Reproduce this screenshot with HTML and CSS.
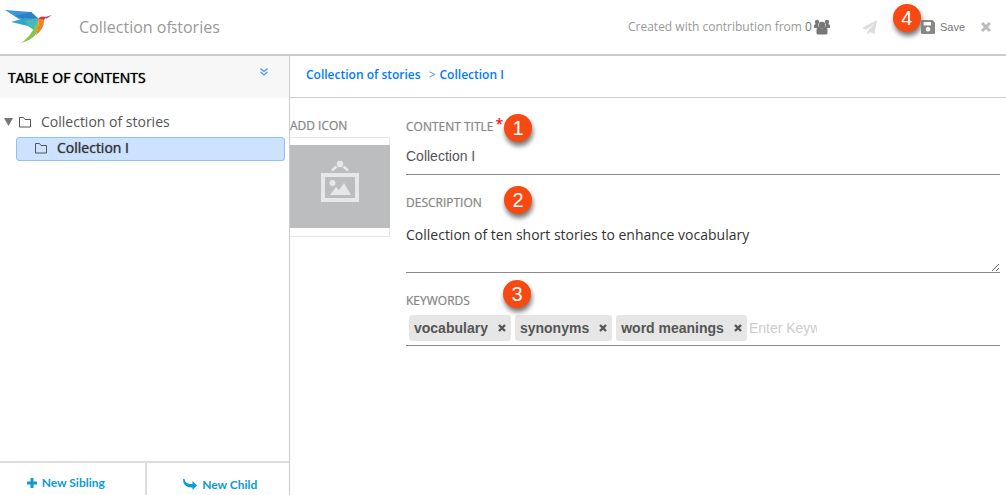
FILE: index.html
```html
<!DOCTYPE html>
<html lang="en">
<head>
<meta charset="utf-8">
<meta name="viewport" content="width=device-width, initial-scale=1">
<title>Collection of stories</title>
<link rel="stylesheet" href="styles.css">
</head>
<body>
<header class="topbar">
  <svg class="logo" viewBox="0 0 48 36" aria-hidden="true">
    <path fill="#3a98d8" d="M0 1 26 3l7 6-5 5-14-4z"/>
    <path fill="#2c7fc9" d="M10 7 26 3l7 7-8 2z"/>
    <path fill="#35a5c4" d="M6 13l14-4 13 1-2 12-8-5z"/>
    <path fill="#48b9bb" d="M20 12l13-3-2 14-6-5z"/>
    <path fill="#8bc34a" d="M33 12c2 11-3 18-17 22 8-6 10-9 14-17z"/>
    <path fill="#f58220" d="M33 10l6 1c0 6-2 10-8 15 2-6 3-10 2-16z"/>
    <path fill="#e5342f" d="M33 10c2-3 5-3 8-2l-2 3z"/>
    <path fill="#b0479b" d="M40 8l7-2-6 4z"/>
  </svg>
  <h1 class="title"><span>Collection of</span><span class="title-tail">stories</span></h1>
  <div class="contrib">Created with contribution from <span class="count">0</span>
    <svg class="users" viewBox="0 0 16 16" aria-hidden="true"><g fill="#777"><circle cx="3" cy="3" r="2.2"/><circle cx="13" cy="3" r="2.2"/><path d="M0 9V7q0-2 2-2h2l1 4zM16 9V7q0-2-2-2h-2l-1 4z"/><circle cx="8" cy="6" r="3.3"/><path d="M2.500 14V11q0-3 3-3l2.500 1.500L10.500 8q3 0 3 3v3q0 1.500-1.500 1.500H4Q2.500 15.500 2.500 14z"/></g></svg>
  </div>
  <button class="tool send" type="button" aria-label="Send"><svg viewBox="0 0 15 15" aria-hidden="true"><path fill="#ddd" d="M15 0 12.500 14 8 12l-2.500 3v-4L13 3 4 10 0 8z"/></svg></button>
  <button class="tool save" type="button"><svg viewBox="0 0 14 14" aria-hidden="true"><path fill="#888" fill-rule="evenodd" d="M1 0h10.500L14 2.500V13q0 1-1 1H1q-1 0-1-1V1q0-1 1-1zM2.500 2v3.500H10V2zM7 7a2.300 2.300 0 1 0 .1 0z"/></svg>Save<span class="callout callout-save">4</span></button>
  <button class="tool close" type="button" aria-label="Close"><svg viewBox="0 0 10 10" aria-hidden="true"><path fill="none" stroke="#bbb" stroke-width="3" d="M1 1l8 8M9 1 1 9"/></svg></button>
</header>
<div class="workspace">
  <aside class="sidebar">
    <div class="toc-head">
      <h2>TABLE OF CONTENTS</h2>
      <button class="expand" type="button" aria-label="Expand all"><svg viewBox="0 0 8 8" aria-hidden="true"><path fill="none" stroke="#3b99fc" stroke-width="1.300" d="M.5.5 4 3.500 7.500.5M.5 4 4 7l3.500-3"/></svg></button>
    </div>
    <ul class="tree">
      <li>
        <div class="node"><svg class="caret" viewBox="0 0 10 8" aria-hidden="true"><path fill="#777" d="M0 0h9L4.500 8z"/></svg><svg class="folder" viewBox="0 0 13 11" aria-hidden="true"><path fill="none" stroke="#555" d="M.5 10V.5h4L6 2.500h5.500V10z"/></svg>Collection of stories</div>
        <ul>
          <li class="node active"><svg class="folder" viewBox="0 0 13 11" aria-hidden="true"><path fill="none" stroke="#555" d="M.5 10V.5h4L6 2.500h5.500V10z"/></svg>Collection I</li>
        </ul>
      </li>
    </ul>
    <div class="actions">
      <button type="button"><svg class="plus" viewBox="0 0 10 10" aria-hidden="true"><path stroke="#0a9bd6" stroke-width="3" d="M5 0v10M0 5h10"/></svg>New Sibling</button>
      <button class="child" type="button"><svg class="arrow" viewBox="0 0 14 11" aria-hidden="true"><path fill="#0a9bd6" d="M0 0h1.500q.5 5.500 8 5V2L14 6.500 9.500 11V8.500Q0 9 0 0z"/></svg>New Child</button>
    </div>
  </aside>
  <main class="content">
    <nav class="crumbs"><a href="#root">Collection of stories</a><span class="sep">&gt;</span><a href="#current">Collection I</a></nav>
    <form class="form">
      <div class="icon-col">
        <span class="label" id="icon-label">ADD ICON</span>
        <button class="picture" type="button" aria-labelledby="icon-label"><svg viewBox="0 0 100 83" aria-hidden="true"><path fill="#bbbdbf" d="M0 0h100v83H0z"/><circle cx="50" cy="19" r="3.200" fill="#e6e7e8"/><path fill="none" stroke="#e6e7e8" stroke-width="2.500" d="M46.500 21.500l-4.500 4M53.500 21.500l4.500 4"/><path fill="none" stroke="#e6e7e8" stroke-width="4" d="M33 30h34v25H33z"/><circle cx="42.500" cy="38" r="3" fill="#e6e7e8"/><path fill="#e6e7e8" d="M40 50l6-8 3 3 5-7 7 12z"/></svg></button>
      </div>
      <div class="fields">
        <div class="field">
          <label class="label" for="title">CONTENT TITLE<span class="required">*</span></label><span class="callout">1</span>
          <input class="text title-input" id="title" type="text" value="Collection I">
        </div>
        <div class="field">
          <label class="label" for="description">DESCRIPTION</label><span class="callout callout-description">2</span>
          <textarea class="text" id="description">Collection of ten short stories to enhance vocabulary</textarea>
        </div>
        <div class="field">
          <label class="label" for="keywords">KEYWORDS</label><span class="callout callout-keywords">3</span>
          <div class="tags">
            <span class="tag">vocabulary<button type="button" aria-label="Remove vocabulary"><svg viewBox="0 0 8 8" aria-hidden="true"><path stroke="#555" stroke-width="2.400" d="M1 1l6 6M7 1 1 7"/></svg></button></span>
            <span class="tag">synonyms<button type="button" aria-label="Remove synonyms"><svg viewBox="0 0 8 8" aria-hidden="true"><path stroke="#555" stroke-width="2.400" d="M1 1l6 6M7 1 1 7"/></svg></button></span>
            <span class="tag">word meanings<button type="button" aria-label="Remove word meanings"><svg viewBox="0 0 8 8" aria-hidden="true"><path stroke="#555" stroke-width="2.400" d="M1 1l6 6M7 1 1 7"/></svg></button></span>
            <input id="keywords" type="text" placeholder="Enter Keywords">
          </div>
        </div>
      </div>
    </form>
  </main>
</div>
</body>
</html>
```
FILE: styles.css
```css
* { box-sizing: border-box; }
body {
  margin: 0;
  min-height: 100vh;
  display: flex;
  flex-direction: column;
  background: #fff;
  color: #333;
  font: 14px/20px "Open Sans", "Noto Sans", sans-serif;
}
button, input, textarea { font: inherit; color: inherit; border: 0; margin: 0; padding: 0; background: none; }
button { cursor: pointer; }
svg { display: block; flex: none; }
h1, h2, ul { margin: 0; padding: 0; list-style: none; font-weight: 400; }

.topbar {
  display: flex;
  align-items: center;
  height: 56px;
  padding: 0 15px 0 5px;
  border-bottom: 2px solid #ccc;
}
.logo { width: 48px; height: 36px; }
.title { display: flex; margin-left: 26px; color: #999; font-size: 16px; line-height: 24px; }
.title-tail { display: flex; justify-content: flex-end; width: 48px; overflow: hidden; }
.contrib { display: flex; align-items: center; margin-left: auto; color: #999; font-size: 12px; white-space: pre; }
.count { color: #777; }
.users { width: 16px; height: 16px; margin-left: 2px; }
.tool { display: flex; align-items: center; color: #777; }
.send { margin-left: 32px; }
.send svg { width: 15px; height: 15px; }
.save { position: relative; gap: 5px; margin-left: 44px; font: 11px/16px "Liberation Sans", Arial, sans-serif; }
.save svg { width: 14px; height: 14px; }
.close { margin-left: 16px; }
.close svg { width: 10px; height: 10px; }

.workspace { flex: 1; display: flex; }
.sidebar { display: flex; flex-direction: column; width: 290px; border-right: 1px solid #ccc; }
.toc-head {
  display: flex;
  justify-content: space-between;
  height: 42px;
  padding: 12px 21px 0 8px;
  background: #f7f7f7;
}
.toc-head h2 { color: #000; font-size: 14px; line-height: 20px; text-shadow: 0 0 1px #000; }
.expand { height: 8px; }
.expand svg { width: 8px; height: 8px; }
.tree { flex: 1; padding: 12px 4px 0; color: #555; }
.node { display: flex; align-items: center; height: 24px; }
.caret { width: 10px; height: 8px; margin-right: 5px; }
.folder { width: 13px; height: 11px; margin-right: 9px; }
.active {
  margin: 3px 0 0 12px;
  padding: 0 0 2px 18px;
  border: 1px solid #8cc2ff;
  border-radius: 3px;
  background: #cce2ff;
  color: #333;
  font-weight: 500;
  text-shadow: 0 0 1px #555;
}
.actions { display: grid; grid-template-columns: 1fr 1fr; height: 34px; border-top: 2px solid #ddd; }
.actions button {
  display: flex;
  align-items: center;
  justify-content: center;
  gap: 5px;
  padding: 7px 13px 0 0;
  color: #0a9bd6;
  font: bold 12px/20px Lato, "Noto Sans", sans-serif;
}
.actions .child { padding: 11px 0 0 5px; border-left: 2px solid #ddd; }
.plus { width: 10px; height: 10px; }
.arrow { width: 14px; height: 11px; }

.content { flex: 1; min-width: 0; }
.crumbs {
  display: flex;
  height: 42px;
  padding: 9px 16px;
  border-bottom: 1px solid #ccc;
  color: #3b99fc;
  font-size: 12px;
}
.crumbs a { color: #007bff; font-weight: 600; text-decoration: none; }
.sep { padding: 0 4px 0 8px; }
.form { display: flex; gap: 16px; padding: 18px 6px 0 0; }
.icon-col { width: 100px; }
.label { display: block; color: #888; font-size: 12px; line-height: 20px; text-shadow: 0 0 1px #bbb; }
.picture { display: block; width: 100%; margin-top: 1px; padding: 7px 0 8px; border: 1px solid #e6e6e6; border-left: 0; }
.picture svg { width: 100px; height: 83px; }
.fields { flex: 1; min-width: 0; }
.field { position: relative; }
.required { padding-left: 2px; color: #f00; font-size: 14px; line-height: 16px; vertical-align: 2px; }
.callout {
  position: absolute;
  top: -2px;
  left: 98px;
  width: 28px;
  height: 28px;
  border-radius: 50%;
  background: #f64a12;
  box-shadow: 1px 4px 5px #777;
  color: #fff;
  font: 20px/28px "Liberation Sans", Arial, sans-serif;
  text-align: center;
}
.callout-description { top: -7px; }
.callout-keywords { top: -11px; left: 97px; }
.callout-save { top: -15px; left: -28px; }
.text { display: block; width: 100%; border-bottom: 1px solid #888; outline: 0; }
.title-input { height: 38px; margin-bottom: 18px; color: #555; font: 14px/20px "Liberation Sans", Arial, sans-serif; }
textarea.text { height: 60px; margin-bottom: 18px; padding-top: 12px; resize: vertical; }
.tags { display: flex; align-items: center; gap: 4px; padding: 4px 3px 4px; border-bottom: 1px solid #888; }
.tag {
  display: flex;
  align-items: center;
  gap: 10px;
  height: 26px;
  padding: 0 5px;
  border-radius: 3px;
  background: #e6e6e6;
  color: #555;
  font: bold 14px/20px "Liberation Sans", Arial, sans-serif;
}
.tag svg { width: 8px; height: 8px; }
.tags input { width: 68px; margin-left: -2px; font: 14px/20px "Liberation Sans", Arial, sans-serif; }
.tags input::placeholder { color: #ccc; }
```
